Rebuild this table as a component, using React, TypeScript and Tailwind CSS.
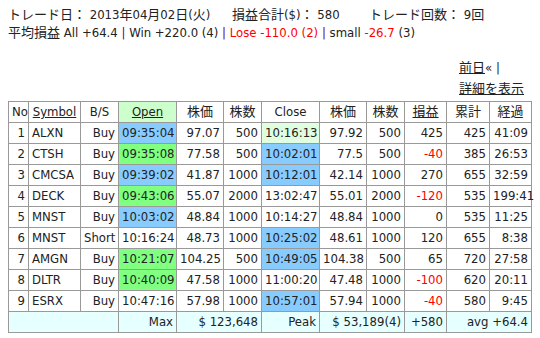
import React from "react";

type Row = {
  no: number;
  symbol: string;
  bs: string;
  open: string;
  openBg?: "blue" | "green";
  openPrice: string;
  openQty: string;
  close: string;
  closeBg?: "blue" | "pale";
  closePrice: string;
  closeQty: string;
  pl: number;
  total: number;
  elapsed: string;
};

const rows: Row[] = [
  { no: 1, symbol: "ALXN", bs: "Buy", open: "09:35:04", openBg: "blue", openPrice: "97.07", openQty: "500", close: "10:16:13", closeBg: "pale", closePrice: "97.92", closeQty: "500", pl: 425, total: 425, elapsed: "41:09" },
  { no: 2, symbol: "CTSH", bs: "Buy", open: "09:35:08", openBg: "green", openPrice: "77.58", openQty: "500", close: "10:02:01", closeBg: "blue", closePrice: "77.5", closeQty: "500", pl: -40, total: 385, elapsed: "26:53" },
  { no: 3, symbol: "CMCSA", bs: "Buy", open: "09:39:02", openBg: "blue", openPrice: "41.87", openQty: "1000", close: "10:12:01", closeBg: "blue", closePrice: "42.14", closeQty: "1000", pl: 270, total: 655, elapsed: "32:59" },
  { no: 4, symbol: "DECK", bs: "Buy", open: "09:43:06", openBg: "green", openPrice: "55.07", openQty: "2000", close: "13:02:47", closePrice: "55.01", closeQty: "2000", pl: -120, total: 535, elapsed: "199:41" },
  { no: 5, symbol: "MNST", bs: "Buy", open: "10:03:02", openBg: "blue", openPrice: "48.84", openQty: "1000", close: "10:14:27", closePrice: "48.84", closeQty: "1000", pl: 0, total: 535, elapsed: "11:25" },
  { no: 6, symbol: "MNST", bs: "Short", open: "10:16:24", openPrice: "48.73", openQty: "1000", close: "10:25:02", closeBg: "blue", closePrice: "48.61", closeQty: "1000", pl: 120, total: 655, elapsed: "8:38" },
  { no: 7, symbol: "AMGN", bs: "Buy", open: "10:21:07", openBg: "green", openPrice: "104.25", openQty: "500", close: "10:49:05", closeBg: "blue", closePrice: "104.38", closeQty: "500", pl: 65, total: 720, elapsed: "27:58" },
  { no: 8, symbol: "DLTR", bs: "Buy", open: "10:40:09", openBg: "green", openPrice: "47.58", openQty: "1000", close: "11:00:20", closePrice: "47.48", closeQty: "1000", pl: -100, total: 620, elapsed: "20:11" },
  { no: 9, symbol: "ESRX", bs: "Buy", open: "10:47:16", openPrice: "57.98", openQty: "1000", close: "10:57:01", closeBg: "blue", closePrice: "57.94", closeQty: "1000", pl: -40, total: 580, elapsed: "9:45" },
];

const bgClass = (bg?: string) =>
  bg === "blue"
    ? "bg-[#88ccff]"
    : bg === "green"
    ? "bg-[#80ff80]"
    : bg === "pale"
    ? "bg-[#e0ffe0]"
    : "";

const td = "border border-[#999] px-[3px] h-[21px] whitespace-nowrap";
const th = `${td} font-normal`;

export default function App() {
  return (
    <div
      className="w-[540px] h-[338px] bg-white text-[#222] text-[13px] leading-[18px] overflow-hidden"
      style={{ fontFamily: '"DejaVu Sans Condensed", "DejaVu Sans", "Noto Sans CJK JP", sans-serif', fontStretch: "condensed" }}
    >
      <div className="pt-[6px] pl-[8px]">
        <div className="flex">
          <span className="w-[224px]">トレード日： 2013年04月02日(火)</span>
          <span className="w-[137px]">損益合計($)： 580</span>
          <span>トレード回数： 9回</span>
        </div>
        <div>
          平均損益 All +64.4 <span className="text-[#606]">|</span> Win +220.0 (4){" "}
          <span className="text-[#606]">|</span>{" "}
          <span className="text-[#f00]">Lose -110.0 (2)</span>{" "}
          <span className="text-[#606]">|</span> small{" "}
          <span className="text-[#f00]">-26.7</span> (3)
        </div>
      </div>

      <div className="flex justify-end pr-[16px] mt-[15px] leading-[21px]">
        <div className="w-[65px]">
          <div>
            <span className="underline">前日</span>« |
          </div>
          <div className="underline">詳細を表示</div>
        </div>
      </div>

      <table className="ml-[8px] mt-[2px] border-collapse table-fixed w-[523px]">
        <colgroup>
          <col className="w-[20px]" />
          <col className="w-[52px]" />
          <col className="w-[38px]" />
          <col className="w-[58px]" />
          <col className="w-[47px]" />
          <col className="w-[38px]" />
          <col className="w-[58px]" />
          <col className="w-[47px]" />
          <col className="w-[38px]" />
          <col className="w-[42px]" />
          <col className="w-[43px]" />
          <col className="w-[42px]" />
        </colgroup>
        <thead>
          <tr>
            <th className={`${th} text-right`}>No</th>
            <th className={th}><span className="underline">Symbol</span></th>
            <th className={th}>B/S</th>
            <th className={`${th} bg-[#ccffcc]`}><span className="underline">Open</span></th>
            <th className={th}>株価</th>
            <th className={th}>株数</th>
            <th className={th}>Close</th>
            <th className={th}>株価</th>
            <th className={th}>株数</th>
            <th className={th}><span className="underline">損益</span></th>
            <th className={th}>累計</th>
            <th className={th}>経過</th>
          </tr>
        </thead>
        <tbody>
          {rows.map((r) => (
            <tr key={r.no}>
              <td className={`${td} text-right`}>{r.no}</td>
              <td className={`${td} text-left`}>{r.symbol}</td>
              <td className={`${td} text-right`}>{r.bs}</td>
              <td className={`${td} text-center ${bgClass(r.openBg)}`}>{r.open}</td>
              <td className={`${td} text-right`}>{r.openPrice}</td>
              <td className={`${td} text-right`}>{r.openQty}</td>
              <td className={`${td} text-center ${bgClass(r.closeBg)}`}>{r.close}</td>
              <td className={`${td} text-right`}>{r.closePrice}</td>
              <td className={`${td} text-right`}>{r.closeQty}</td>
              <td className={`${td} text-right ${r.pl < 0 ? "text-[#f00]" : ""}`}>{r.pl}</td>
              <td className={`${td} text-right`}>{r.total}</td>
              <td className={`${td} text-right`}>{r.elapsed}</td>
            </tr>
          ))}
          <tr className="bg-[#e6ffff]">
            <td className={td} colSpan={3}></td>
            <td className={`${td} text-right`}>Max</td>
            <td className={`${td} text-right`} colSpan={2}>$ 123,648</td>
            <td className={`${td} text-right`}>Peak</td>
            <td className={`${td} text-right`} colSpan={2}>$ 53,189(4)</td>
            <td className={`${td} text-right`}>+580</td>
            <td className={`${td} text-right`} colSpan={2}>avg +64.4</td>
          </tr>
        </tbody>
      </table>
    </div>
  );
}
